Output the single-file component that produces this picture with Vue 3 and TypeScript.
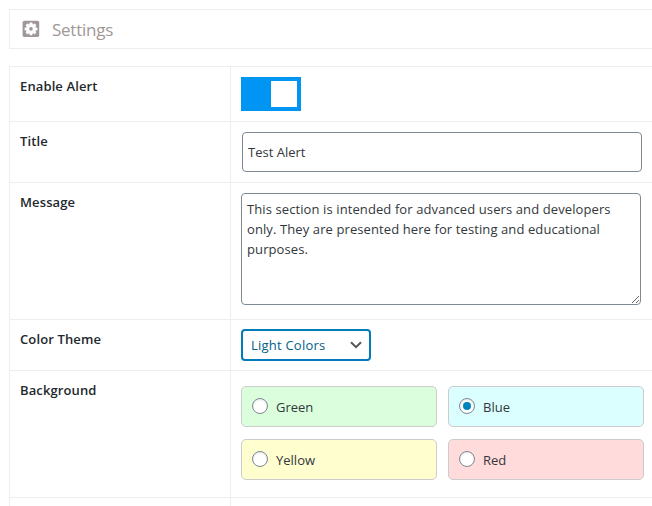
<script setup lang="ts">
import { ref } from 'vue'

interface Swatch {
  name: string
  tone: string
}

const swatches: Swatch[] = [
  { name: 'Green', tone: 'green' },
  { name: 'Blue', tone: 'blue' },
  { name: 'Yellow', tone: 'yellow' },
  { name: 'Red', tone: 'red' },
]

const enabled = ref(true)
const title = ref('Test Alert')
const message = ref(
  'This section is intended for advanced users and developers only. They are presented here for testing and educational purposes.',
)
const theme = ref('Light Colors')
const background = ref('Blue')
</script>

<template>
  <main class="page">
    <header class="heading">
      <svg class="gear" viewBox="0 0 18 18" aria-hidden="true">
        <rect x="0.6" y="0.8" width="16.6" height="16.2" rx="1.8" fill="#a09797" />
        <g fill="#fff">
          <circle cx="9" cy="8.9" r="4.8" />
          <rect
            v-for="n in 4"
            :key="n"
            x="7.5"
            y="2.5"
            width="3"
            height="12.8"
            rx="0.7"
            :transform="`rotate(${n * 45} 9 8.9)`"
          />
        </g>
        <circle cx="9" cy="8.9" r="1.8" fill="#a09797" />
      </svg>
      <h1>Settings</h1>
    </header>

    <form class="table" @submit.prevent>
      <div class="row row-enable">
        <div class="label">Enable Alert</div>
        <div class="field">
          <button
            type="button"
            class="toggle"
            :class="{ on: enabled }"
            aria-label="Enable Alert"
            @click="enabled = !enabled"
          >
            <span class="knob"></span>
          </button>
        </div>
      </div>
      <div class="row row-title">
        <div class="label">Title</div>
        <div class="field"><input v-model="title" class="text" type="text" /></div>
      </div>
      <div class="row row-message">
        <div class="label">Message</div>
        <div class="field"><textarea v-model="message" class="area" spellcheck="false"></textarea></div>
      </div>
      <div class="row row-theme">
        <div class="label">Color Theme</div>
        <div class="field">
          <div class="select">
            <select v-model="theme">
              <option>Light Colors</option>
              <option>Dark Colors</option>
            </select>
            <svg class="chevron" viewBox="0 0 12 8" aria-hidden="true">
              <path d="M1 1.2 6 6.2 11 1.2" fill="none" stroke="#555" stroke-width="2" />
            </svg>
          </div>
        </div>
      </div>
      <div class="row row-background">
        <div class="label">Background</div>
        <div class="field swatches">
          <label v-for="s in swatches" :key="s.name" class="swatch" :class="s.tone">
            <input v-model="background" type="radio" name="background" :value="s.name" />
            <span>{{ s.name }}</span>
          </label>
        </div>
      </div>
      <div class="row row-next">
        <div class="label"></div>
        <div class="field"></div>
      </div>
    </form>
  </main>
</template>

<style>
body {
  background: #fff;
  overflow: hidden;
}
</style>

<style scoped>
.page {
  box-sizing: border-box;
  height: 506px;
  padding: 9px 0 0 9px;
  overflow: hidden;
  font-family: 'Open Sans', 'Noto Sans', sans-serif;
  font-size: 13px;
  color: #32373c;
}
.page * {
  box-sizing: border-box;
}
.heading {
  display: flex;
  align-items: center;
  gap: 12px;
  height: 40px;
  padding: 0 0 0 12px;
  border: 1px solid #eee;
  border-right: 0;
}
.gear {
  width: 18px;
  height: 18px;
}
h1 {
  margin: 2px 0 0;
  font-size: 17px;
  font-weight: 400;
  line-height: 24px;
  letter-spacing: -0.25px;
  color: #a09797;
}
.table {
  margin-top: 17px;
  border-left: 1px solid #eee;
}
.row {
  display: grid;
  grid-template-columns: 220px 1fr;
  border-top: 1px solid #eee;
}
.row-enable { height: 55px; }
.row-title { height: 61px; }
.row-message { height: 137px; }
.row-theme { height: 51px; }
.row-background { height: 127px; }
.row-next { height: 40px; }
.label {
  padding: 9px 10px;
  font-weight: 600;
  font-size: 13px;
  line-height: 20px;
  letter-spacing: 0.12px;
  color: #23282d;
}
.field {
  padding: 10px;
  border-left: 1px solid #eee;
}
.row-theme .field {
  padding-top: 9px;
}
.toggle {
  display: flex;
  width: 60px;
  height: 34px;
  padding: 4px;
  border: 0;
  background: #ccc;
}
.toggle.on {
  justify-content: flex-end;
  background: #0095f3;
}
.knob {
  width: 26px;
  height: 26px;
  background: #fff;
}
.text,
.area {
  display: block;
  width: 400px;
  border: 1px solid #7e8993;
  border-radius: 4px;
  background: #fff;
  font: inherit;
  color: #32373c;
  outline: none;
}
.text {
  height: 40px;
  margin-left: 1px;
  padding: 0 5px;
}
.area {
  height: 112px;
  padding: 5px 5px;
  line-height: 20px;
  letter-spacing: 0.1px;
  resize: vertical;
}
.select {
  display: grid;
  align-items: center;
  width: 130px;
  height: 32px;
  border: 2px solid #007cba;
  border-radius: 4px;
}
.select > * {
  grid-area: 1 / 1;
}
select {
  width: 100%;
  height: 28px;
  padding: 0 24px 0 8px;
  border: 0;
  background: transparent;
  appearance: none;
  font: inherit;
  letter-spacing: 0.22px;
  color: #016087;
  outline: none;
}
.chevron {
  justify-self: end;
  width: 12px;
  height: 8px;
  margin-right: 7px;
  pointer-events: none;
}
.swatches {
  display: grid;
  grid-template-columns: 196px 196px;
  grid-auto-rows: 41px;
  gap: 12px 11px;
  padding-top: 15px;
}
.swatch {
  display: flex;
  align-items: center;
  gap: 8px;
  padding: 0 10px;
  border: 1px solid #ccc;
  border-radius: 5px;
}
.swatch span {
  padding-top: 1px;
}
.green { background: #dbffdd; }
.blue { background: #dbfeff; }
.yellow { background: #fffecf; }
.red { background: #ffdbdb; }
.swatch input {
  display: grid;
  place-items: center;
  flex: none;
  width: 16px;
  height: 16px;
  margin: 0 0 1px;
  appearance: none;
  border: 1px solid #7e8993;
  border-radius: 50%;
  background: #fff;
  box-shadow: inset 0 1px 2px rgba(0, 0, 0, 0.1);
}
.swatch input:checked::before {
  content: '';
  width: 8px;
  height: 8px;
  border-radius: 50%;
  background: #0085ba;
}
</style>
